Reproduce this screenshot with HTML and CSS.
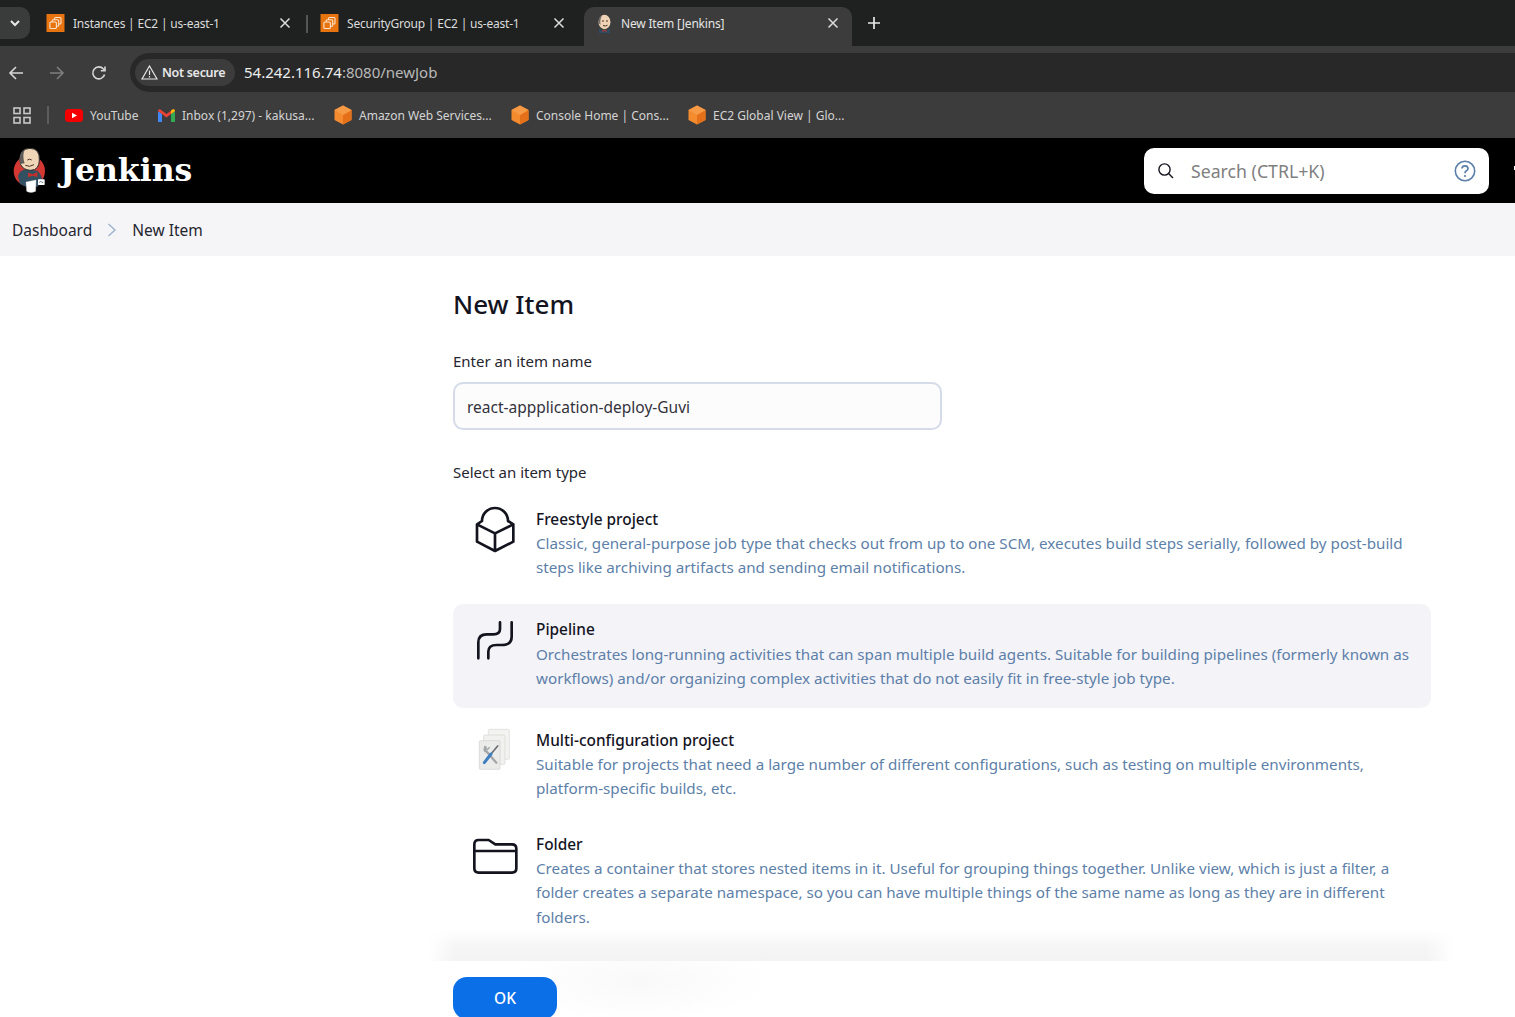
FILE: index.html
```html
<!DOCTYPE html>
<html lang="en">
<head>
<meta charset="utf-8">
<title>New Item [Jenkins]</title>
<link rel="stylesheet" href="styles.css">
</head>
<body>
<svg class="defs" width="0" height="0" aria-hidden="true">
  <defs>
    <symbol id="ec2" viewBox="0 0 18 18">
      <rect width="18" height="18" fill="#e8740f"/>
      <rect x="8" y="3.5" width="6.5" height="6.5" rx="1" fill="none" stroke="#fbe3cc" stroke-width="1.1"/>
      <rect x="5.7" y="5.7" width="6.5" height="6.5" rx="1" fill="#e8740f" stroke="#fbe3cc" stroke-width="1.1"/>
      <rect x="3.4" y="8" width="6.5" height="6.5" rx="1" fill="#e8740f" stroke="#fbe3cc" stroke-width="1.1"/>
    </symbol>
    <symbol id="cube" viewBox="0 0 18 20">
      <path d="M9 0.5 17.5 5 17.5 15 9 19.5 0.5 15 0.5 5Z" fill="#f58b2f"/>
      <path d="M9 10 17.5 5 17.5 15 9 19.5Z" fill="#e5701a"/>
      <path d="M9 0.5 17.5 5 9 10 0.5 5Z" fill="#f79a45"/>
    </symbol>
    <symbol id="close" viewBox="0 0 12 12">
      <path d="M1.5 1.5 10.5 10.5M10.5 1.5 1.5 10.5" stroke="#dcdcdc" stroke-width="1.5" fill="none"/>
    </symbol>
  </defs>
</svg>

<div class="tabstrip">
  <div class="tab-menu">
    <svg width="12" height="12" viewBox="0 0 12 12"><path d="M2 4 6 8 10 4" fill="none" stroke="#e8e8e8" stroke-width="2"/></svg>
  </div>
  <div class="tab tab-first">
    <svg class="fav" width="19" height="18"><use href="#ec2"/></svg>
    <span class="tab-title">Instances | EC2 | us-east-1</span>
    <svg class="tab-x" width="12" height="12"><use href="#close"/></svg>
  </div>
  <span class="tab-sep"></span>
  <div class="tab tab-second">
    <svg class="fav" width="19" height="18"><use href="#ec2"/></svg>
    <span class="tab-title">SecurityGroup | EC2 | us-east-1</span>
    <svg class="tab-x" width="12" height="12"><use href="#close"/></svg>
  </div>
  <div class="tab tab-active">
    <svg class="fav" width="17" height="19" viewBox="0 0 17 19">
      <path d="M3 14 Q8 19 14 14 L14 19 L3 19Z" fill="#2f4a63"/>
      <path d="M6.5 15.5 8.5 16.5 10.5 15.5 10.5 18 8.5 17 6.5 18Z" fill="#b23a32"/>
      <ellipse cx="8.5" cy="8" rx="6" ry="7.2" fill="#efd3b5"/>
      <path d="M2.8 9 Q2 3 6 1.5 Q3.8 5 4.5 11Z" fill="#6d6a68"/>
      <path d="M6 7h2M10 7h2M7 11.5q2.5 1.2 4.5-.3" stroke="#4a352c" stroke-width="1" fill="none"/>
    </svg>
    <span class="tab-title">New Item [Jenkins]</span>
    <svg class="tab-x" width="12" height="12"><use href="#close"/></svg>
  </div>
  <svg class="tab-new" width="14" height="14" viewBox="0 0 14 14"><path d="M7 1V13M1 7H13" stroke="#e8e8e8" stroke-width="1.7" fill="none"/></svg>
</div>

<div class="toolbar">
  <svg class="nav-back" width="16" height="16" viewBox="0 0 16 16"><path d="M15 8H2M8 2 2 8 8 14" fill="none" stroke="#d6d6d6" stroke-width="1.6"/></svg>
  <svg class="nav-fwd" width="16" height="16" viewBox="0 0 16 16"><path d="M1 8H14M8 2 14 8 8 14" fill="none" stroke="#7d7d7d" stroke-width="1.6"/></svg>
  <svg class="nav-reload" width="16" height="16" viewBox="0 0 16 16"><path d="M13.6 9.5A6 6 0 1 1 12.4 4L14 5.6M14 1.5V5.8H9.8" fill="none" stroke="#d6d6d6" stroke-width="1.6"/></svg>
  <div class="omnibox">
    <div class="secure-pill">
      <svg width="17" height="15" viewBox="0 0 17 15"><path d="M8.5 1 16 14H1Z" fill="none" stroke="#e8e8e8" stroke-width="1.2"/><path d="M8.5 5.5V10M8.5 11V12.4" stroke="#e8e8e8" stroke-width="1.2"/></svg>
      <span class="secure-text">Not secure</span>
    </div>
    <span class="url"><span class="url-host">54.242.116.74</span>:8080/newJob</span>
  </div>
</div>

<div class="bookmarks">
  <svg class="apps" width="18" height="17" viewBox="0 0 18 17"><g fill="none" stroke="#c8c8c8" stroke-width="1.6"><rect x="1" y="1" width="6" height="5.5"/><rect x="11" y="1" width="6" height="5.5"/><rect x="1" y="10.5" width="6" height="5.5"/><rect x="11" y="10.5" width="6" height="5.5"/></g></svg>
  <span class="bm-sep"></span>
  <div class="bm bm-yt">
    <svg width="18" height="13" viewBox="0 0 18 13"><rect width="18" height="13" rx="3.5" fill="#f40000"/><path d="M7 3.7 12 6.5 7 9.3Z" fill="#fff"/></svg>
    <span>YouTube</span>
  </div>
  <div class="bm bm-gm">
    <svg width="17" height="13" viewBox="0 0 17 13"><path d="M0 2 V13 H4 V5Z" fill="#4285f4"/><path d="M17 2 V13 H13 V5Z" fill="#34a853"/><path d="M0 2 Q0 0 2 .3 L8.5 5 15 .3 Q17 0 17 2 L13 5 8.5 8.5 4 5Z" fill="#ea4335"/><path d="M13 1.6 15 .3 Q17 0 17 2 L13 5Z" fill="#fbbc04"/></svg>
    <span>Inbox (1,297) - kakusa...</span>
  </div>
  <div class="bm bm-aws1">
    <svg width="18" height="20"><use href="#cube"/></svg>
    <span>Amazon Web Services...</span>
  </div>
  <div class="bm bm-aws2">
    <svg width="18" height="20"><use href="#cube"/></svg>
    <span>Console Home | Cons...</span>
  </div>
  <div class="bm bm-aws3">
    <svg width="18" height="20"><use href="#cube"/></svg>
    <span>EC2 Global View | Glo...</span>
  </div>
</div>

<header class="jk-header">
  <svg class="jk-logo" width="40" height="50" viewBox="30 20 120 150">
    <circle cx="88" cy="95" r="47" fill="#d33833"/>
    <path d="M54 112Q58 92 78 90L112 94Q128 108 126 128L112 142H78L60 134Z" fill="#335061"/>
    <path d="M84 100 98 105 112 98 112 113 98 109 84 114Z" fill="#c5302a"/>
    <path d="M60 62Q60 28 90 27Q120 28 118 62Q118 92 92 93Q70 92 62 76Z" fill="#f0d6b7" stroke="#2b2b2b" stroke-width="3"/>
    <path d="M60 74Q52 45 74 30Q66 52 74 72Z" fill="#5f5c59"/>
    <path d="M82 62q7-5 13 0M76 78q12 7 26-2" fill="none" stroke="#4a352c" stroke-width="3"/>
    <path d="M78 128 108 122 107 156Q92 163 80 156Z" fill="#fff" stroke="#d8d8d8"/>
    <rect x="114" y="120" width="20" height="17" rx="2" fill="#fff"/>
    <path d="M118 130l4-5 4 5 4-2" fill="none" stroke="#335061" stroke-width="2"/>
  </svg>
  <span class="jk-word">Jenkins</span>
  <div class="jk-search">
    <svg width="18" height="18" viewBox="0 0 18 18"><circle cx="7.5" cy="7.5" r="5.6" fill="none" stroke="#14141f" stroke-width="1.4"/><path d="M11.6 11.6 16 16" stroke="#14141f" stroke-width="1.4"/></svg>
    <span class="jk-search-text">Search (CTRL+K)</span>
    <svg class="jk-help" width="22" height="22" viewBox="0 0 22 22"><circle cx="11" cy="11" r="9.7" fill="none" stroke="#5b7fa8" stroke-width="1.6"/><path d="M8 8.5Q8.2 5.8 11 5.8T14 8.4Q14 10 12.4 10.8 11 11.6 11 13.2" fill="none" stroke="#5b7fa8" stroke-width="1.7"/><circle cx="11" cy="16" r="1.1" fill="#5b7fa8"/></svg>
  </div>
  <span class="jk-edge"></span>
</header>

<nav class="crumbs">
  <span class="crumb">Dashboard</span>
  <svg class="crumb-arrow" width="10" height="14" viewBox="0 0 10 14"><path d="M1.5 1 8 7 1.5 13" fill="none" stroke="#9db2cc" stroke-width="1.4"/></svg>
  <span class="crumb">New Item</span>
</nav>

<main class="content">
  <h1 class="title">New Item</h1>
  <label class="label label-name" for="name">Enter an item name</label>
  <div class="name-input" id="name">react-appplication-deploy-Guvi</div>
  <div class="label label-type">Select an item type</div>

  <div class="item item-free">
    <svg class="icon" width="40" height="48" viewBox="60 30 120 144">
      <path d="M66 88 120 115 175 88M120 115V168M66 88V140L120 168 175 140V88L159 78A39 39 0 1 0 81 78Z" fill="none" stroke="#14141f" stroke-width="8" stroke-linejoin="round" stroke-linecap="round"/>
    </svg>
    <div class="item-body">
      <div class="item-name">Freestyle project</div>
      <p class="item-desc">Classic, general-purpose job type that checks out from up to one SCM, executes build steps serially, followed by post-build steps like archiving artifacts and sending email notifications.</p>
    </div>
  </div>

  <div class="item item-pipe">
    <svg class="icon" width="40" height="48" viewBox="60 369 120 144">
      <path d="M170 382V425Q170 450 140 450H125Q100 450 100 470V490M135 382V402Q135 418 115 418H95Q70 418 70 442V490" fill="none" stroke="#14141f" stroke-width="8" stroke-linecap="round"/>
    </svg>
    <div class="item-body">
      <div class="item-name">Pipeline</div>
      <p class="item-desc">Orchestrates long-running activities that can span multiple build agents. Suitable for building pipelines (formerly known as workflows) and/or organizing complex activities that do not easily fit in free-style job type.</p>
    </div>
  </div>

  <div class="item item-multi">
    <svg class="icon" width="40" height="48" viewBox="60 36 120 144">
      <rect x="100" y="46" width="63" height="90" rx="3" fill="#f3f3f1" stroke="#d9d9d6" stroke-width="2"/>
      <rect x="86" y="63" width="64" height="88" rx="3" fill="#f1f1ef" stroke="#d4d4d1" stroke-width="2"/>
      <rect x="73" y="80" width="62" height="86" rx="3" fill="#ebebe9" stroke="#d0d0cd" stroke-width="2"/>
      <path d="M92 100Q84 110 96 114L124 146" fill="none" stroke="#a3a6a8" stroke-width="7" stroke-linecap="round"/>
      <path d="M88 96 96 108 104 100" fill="none" stroke="#a3a6a8" stroke-width="4"/>
      <path d="M128 96 108 120" stroke="#6c7176" stroke-width="5" stroke-linecap="round"/>
      <path d="M108 120 88 146" stroke="#3f7fc1" stroke-width="9" stroke-linecap="round"/>
    </svg>
    <div class="item-body">
      <div class="item-name">Multi-configuration project</div>
      <p class="item-desc">Suitable for projects that need a large number of different configurations, such as testing on multiple environments, platform-specific builds, etc.</p>
    </div>
  </div>

  <div class="item item-folder">
    <svg class="icon icon-folder" width="46" height="38" viewBox="50 366 138 114">
      <path d="M57 385Q57 372 70 372H100L120 385H170Q183 385 183 398V457Q183 470 170 470H70Q57 470 57 457ZM57 405H183" fill="none" stroke="#14141f" stroke-width="8" stroke-linejoin="round"/>
    </svg>
    <div class="item-body">
      <div class="item-name">Folder</div>
      <p class="item-desc">Creates a container that stores nested items in it. Useful for grouping things together. Unlike view, which is just a filter, a folder creates a separate namespace, so you can have multiple things of the same name as long as they are in different folders.</p>
    </div>
  </div>
</main>

<footer class="bottom-bar">
  <button class="ok" type="button">OK</button>
</footer>
</body>
</html>
```
FILE: styles.css
```css
* { box-sizing: border-box; }
html, body { margin: 0; height: 100%; }
body {
  position: relative;
  width: 1515px;
  height: 1017px;
  overflow: hidden;
  background: #fff;
  color: #14141f;
  font-family: "Noto Sans", "Open Sans", sans-serif;
  font-size: 16px;
}
.defs { position: absolute; }

/* Browser chrome */
.tabstrip {
  display: flex;
  align-items: flex-end;
  height: 46px;
  background: #1f2120;
  color: #dcdcdc;
  font-size: 12px;
  letter-spacing: -0.2px;
}
.tab-menu {
  display: flex;
  align-items: center;
  justify-content: center;
  width: 30px;
  height: 32px;
  margin-bottom: 7px;
  background: #3a3b3b;
  border-radius: 0 10px 10px 0;
}
.tab {
  display: flex;
  align-items: center;
  height: 39px;
  padding-bottom: 7px;
}
.tab-first { width: 276px; padding-left: 16px; }
.tab-first .tab-x { margin-right: 15px; }
.tab-second { width: 276px; padding-left: 12px; }
.tab-second .tab-x { margin-right: 19px; }
.tab-active {
  width: 268px;
  padding-left: 12px;
  background: #3c3c3c;
  border-radius: 10px 10px 0 0;
  color: #e4e4e4;
}
.tab-sep {
  width: 2px;
  height: 18px;
  margin: 0 0 13px 0;
  background: #555;
}
.fav { flex: none; }
.tab-title { margin-left: 8px; flex: 1; white-space: nowrap; }
.tab-x { flex: none; margin-right: 13px; }
.tab-new { margin: 0 0 16px 15px; }

.toolbar {
  display: flex;
  align-items: center;
  height: 46px;
  padding-top: 7px;
  background: #3c3c3c;
}
.nav-back { margin-left: 8px; }
.nav-fwd { margin-left: 25px; }
.nav-reload { margin-left: 26px; }
.omnibox {
  display: flex;
  align-items: center;
  flex: 1;
  height: 39px;
  margin-left: 23px;
  padding-left: 5px;
  background: #282828;
  border-radius: 20px 0 0 20px;
}
.secure-pill {
  display: flex;
  align-items: center;
  gap: 4px;
  width: 100px;
  height: 27px;
  padding-left: 6px;
  background: #3c3c3c;
  border-radius: 14px;
}
.secure-text { font-size: 12.5px; font-weight: 600; color: #e8e8e8; letter-spacing: -0.3px; white-space: nowrap; }
.url { margin: 0 0 2px 9px; font-size: 15px; color: #b9b9b9; white-space: nowrap; }
.url-host { color: #ededed; }

.bookmarks {
  display: flex;
  align-items: center;
  height: 47px;
  background: #3c3c3c;
  border-bottom: 1px solid #000;
  color: #d4d4d4;
  font-size: 12px;
}
.apps { margin-left: 13px; }
.bm-sep { width: 2px; height: 18px; margin-left: 16px; background: #5d5d5d; }
.bm { display: flex; align-items: center; gap: 7px; white-space: nowrap; }
.bm-yt { margin-left: 16px; width: 93px; }
.bm-gm { width: 176px; }
.bm-aws1 { width: 177px; }
.bm-aws2 { width: 177px; }

/* Jenkins header */
.jk-header {
  display: flex;
  align-items: center;
  height: 64px;
  background: #000;
  overflow: hidden;
}
.jk-logo { margin-left: 10px; flex: none; }
.jk-word {
  margin: 0 0 2px 10px;
  color: #fff;
  font-family: "DejaVu Serif", "Liberation Serif", serif;
  font-size: 31.5px;
  font-weight: 700;
  line-height: 1;
}
.jk-search {
  display: flex;
  align-items: center;
  width: 345px;
  height: 46px;
  margin-left: auto;
  padding-left: 13px;
  background: #fff;
  border-radius: 10px;
}
.jk-search-text { margin-left: 16px; font-size: 17.7px; color: #7f7f7f; white-space: nowrap; }
.jk-help { margin-left: auto; margin-right: 13px; }
.jk-edge { flex: none; width: 26px; height: 46px; margin-left: 24px; background: radial-gradient(circle at 4px 20px, #fff 3px, transparent 3.5px); margin-right: -24px; }

.crumbs {
  display: flex;
  align-items: center;
  height: 53px;
  padding-left: 12px;
  background: #f5f5f8;
  font-size: 15.5px;
  color: #26262f;
}
.crumb-arrow { margin: 0 15px; }

/* Main content */
.content { padding: 28px 84px 0 453px; }
.title { margin: 0; font-size: 26px; font-weight: 500; line-height: 40px; }
.label { display: block; font-size: 15px; line-height: 24px; color: #26262f; }
.label-name { margin: 25px 0 0 0; }
.name-input {
  width: 489px;
  height: 48px;
  margin-top: 9px;
  padding: 0 12px;
  border: 2px solid #d5dbe8;
  border-radius: 10px;
  background: #fcfcfd;
  font-size: 15.5px;
  line-height: 47px;
  color: #33333b;
}
.label-type { margin-top: 30px; }

.item {
  display: grid;
  grid-template-columns: 83px 1fr;
  align-items: start;
  width: 978px;
  height: 104px;
  padding-right: 15px;
  border-radius: 10px;
}
.item-free { margin-top: 10px; padding-top: 13px; }
.item-pipe { margin-top: 6px; padding-top: 14px; background: #f3f3f8; }
.item-multi { margin-top: 6px; padding-top: 14px; }
.item-folder { padding-top: 14px; }
.icon { margin-left: 22px; margin-top: -2px; }
.item-pipe .icon { margin-top: 0; }
.icon-folder { margin-left: 19px; margin-top: 6px; }
.item-name { padding-top: 1px; font-size: 15.4px; font-weight: 500; line-height: 23px; color: #14141f; }
.item-pipe .item-name { padding-top: 0; line-height: 24px; }
.item-desc { margin: 0; font-size: 15.2px; line-height: 24.3px; color: #5d7fa9; }

/* Sticky footer */
.bottom-bar {
  position: absolute;
  left: 0;
  right: 0;
  top: 961px;
  height: 56px;
  padding: 16px 0 0 453px;
  background: radial-gradient(ellipse 130px 40px at 640px 20px, #f9f9f9, rgba(255,255,255,0)), #fff;
}
.bottom-bar::before {
  content: "";
  position: absolute;
  left: 428px;
  width: 1026px;
  top: -31px;
  height: 31px;
  background: linear-gradient(to bottom, rgba(243,243,243,0), #f6f6f6 50%, #f3f3f3);
  -webkit-mask-image: linear-gradient(to right, transparent, #000 28px, #000 calc(100% - 28px), transparent);
  mask-image: linear-gradient(to right, transparent, #000 28px, #000 calc(100% - 28px), transparent);
}
.ok {
  width: 104px;
  height: 42px;
  border: 0;
  border-radius: 14px;
  background: #0b6fe8;
  color: #fff;
  font-family: inherit;
  font-size: 15.5px;
  font-weight: 500;
}
```
